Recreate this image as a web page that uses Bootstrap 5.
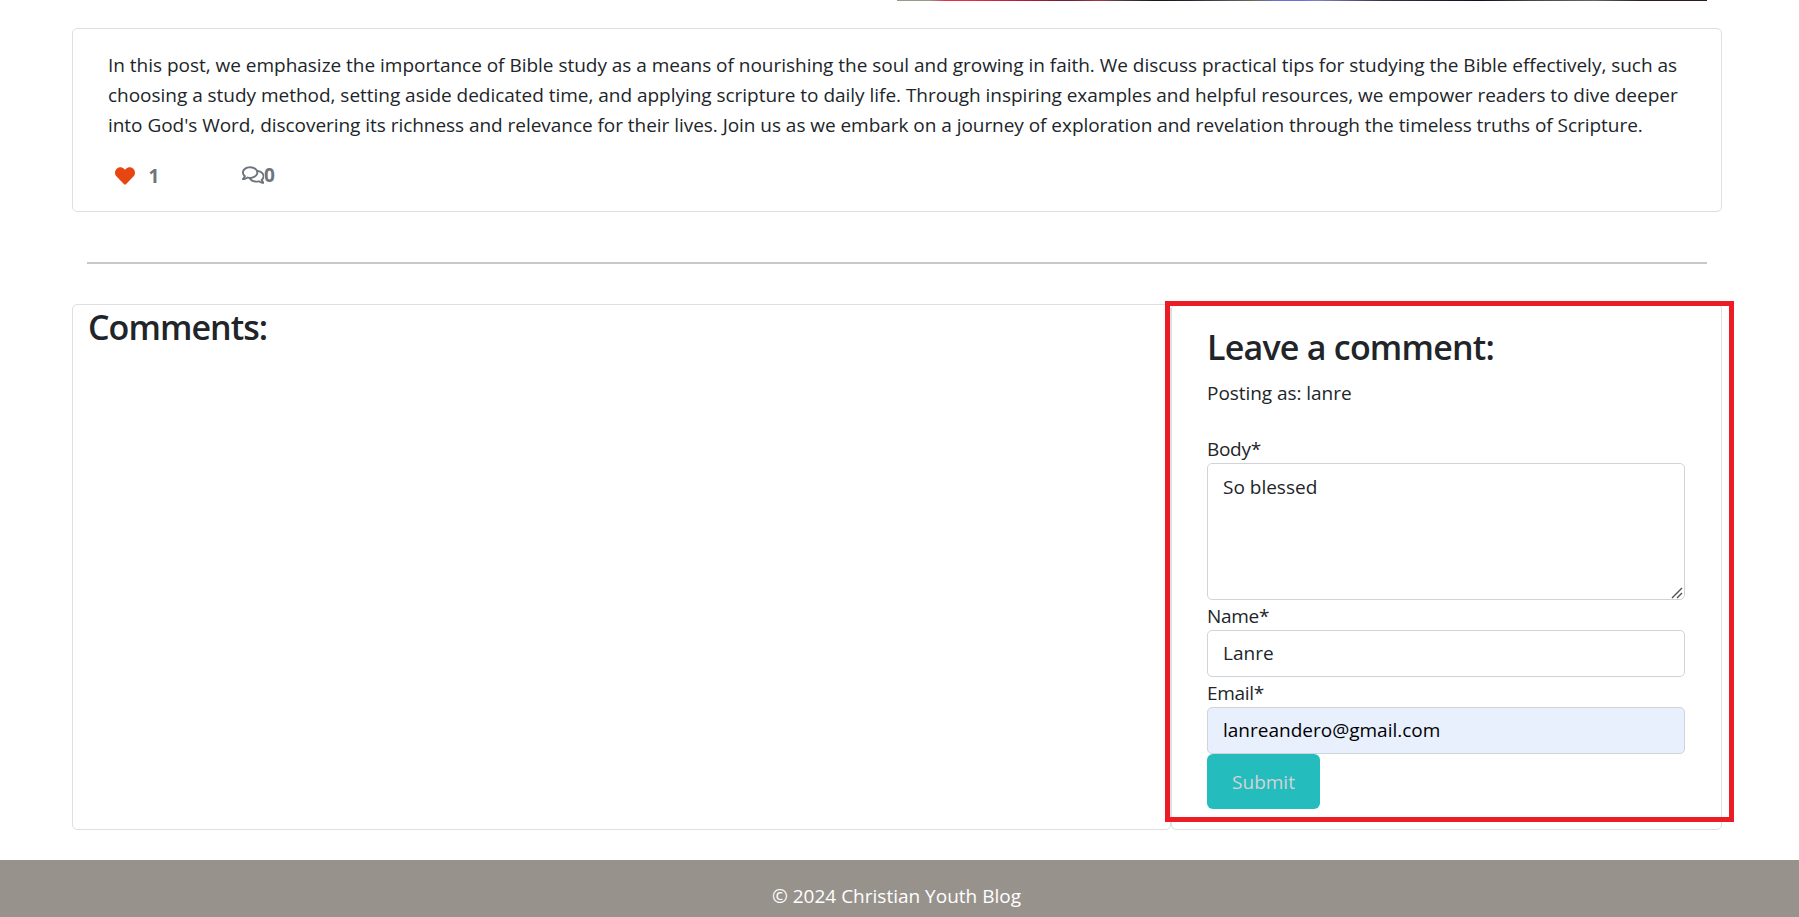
<!DOCTYPE html>
<html lang="en">
<head>
<meta charset="utf-8">
<meta name="viewport" content="width=device-width, initial-scale=1">
<title>Christian Youth Blog</title>
<link href="https://cdn.jsdelivr.net/npm/bootstrap@5.3.0/dist/css/bootstrap.min.css" rel="stylesheet">
<style>
  html { font-size: 20px; overflow: hidden; }
  body { font-family: "Open Sans", "Noto Sans", sans-serif; color: #212529; font-size: 19px; line-height: 30px; overflow: hidden; }
  .blog-page { width: 1650px; margin-left: 72px; }
  .post-image { height: 1px; width: 810px; margin-right: 15px;
    background: linear-gradient(90deg,#99998c 0 4%,#e0304a 6% 9%,#b01a36 16%,#6a2034 21%,#a03848 25%,#4a3a40 28%,#15151c 32%,#252532 36%,#55505a 41%,#6a6a58 44%,#6a70d8 47% 50%,#8080c8 52%,#33334a 60%,#0c1020 72%,#444 78%,#666 86%,#2a1c1c 92%); }
  .card { border-color: #dedfe0; border-radius: 5px; }
  .post-card { height: 184px; margin-top: 27px; padding: 21px 34px 0 35px; }
  .post-line { display: block; white-space: nowrap; }
  .post-line:nth-child(1) { letter-spacing: -.02px; }
  .post-line:nth-child(2) { letter-spacing: -.026px; }
  .post-line:nth-child(3) { letter-spacing: -.041px; }
  .post-meta { margin-top: 20px; color: #6c757d; }
  .likes { width: 133.5px; padding: 1px 0 0 7px; }
  .likes svg { width: 20px; height: 20px; margin: 4.5px 13.5px 0 0; fill: #e84610; }
  .replies svg { width: 22.5px; height: 20px; margin-top: 4.5px; fill: currentColor; }
  .divider { height: 2px; margin: 50px 15px 40px; background: #c8c8c8; }
  .panel { height: 526px; }
  .comments-panel { width: 1099px; padding: 0 15px; }
  .form-panel { width: 551px; padding: 20px 36px 0 35px; }
  h3 { font-size: 34px; font-weight: 600; line-height: 44px; margin-bottom: 9px; white-space: nowrap; letter-spacing: -.77px; }
  .comments-panel h3 { letter-spacing: -.95px; }
  .posting-as { margin-bottom: 25px; letter-spacing: -.05px; }
  .comment-form label { display: block; height: 30px; line-height: 32px; letter-spacing: -.3px; }
  .form-control { display: block; font-size: 19px; line-height: 30px; border-color: #ced4da; border-radius: 5px; padding: 6.5px 15px 7.5px; height: 47px; color: #212529; }
  textarea.form-control { height: 137px; padding-top: 8px; resize: none; }
  .grip { position: absolute; right: 2px; bottom: 1px; width: 12px; height: 12px; stroke: #505050; stroke-width: 1.4; fill: none; }
  .form-control.autofilled { background: #e8f0fe; color: #000; }
  .btn-submit { display: block; background: #25bcbe; color: #d3d3d3; width: 113px; height: 55px; border-radius: 6px; border: 0; padding: 1px 0 0; }
  .red-frame { position: absolute; left: 1093px; top: -3px; width: 569px; height: 521px; border: 5px solid #ed1c24; pointer-events: none; }
  .site-footer { background: #98928d; height: 57px; margin-top: 30px; padding: 21px 6px 0 0; color: #fff; }
</style>
</head>
<body>
<main class="blog-page">
  <div class="post-image ms-auto"></div>
  <article class="card post-card">
    <div>
      <span class="post-line">In this post, we emphasize the importance of Bible study as a means of nourishing the soul and growing in faith. We discuss practical tips for studying the Bible effectively, such as</span>
      <span class="post-line">choosing a study method, setting aside dedicated time, and applying scripture to daily life. Through inspiring examples and helpful resources, we empower readers to dive deeper</span>
      <span class="post-line">into God's Word, discovering its richness and relevance for their lives. Join us as we embark on a journey of exploration and revelation through the timeless truths of Scripture.</span>
    </div>
    <div class="post-meta d-flex fw-bold">
      <div class="likes d-flex align-items-start">
        <svg viewBox="0 0 512 512"><path d="M462.3 62.6C407.5 15.9 326 24.3 275.7 76.2L256 96.5l-19.7-20.3C186.1 24.3 104.5 15.9 49.7 62.6c-62.8 53.6-66.1 149.8-9.9 207.9l193.5 199.8c12.5 12.9 32.8 12.9 45.3 0l193.5-199.8c56.3-58.1 53-154.3-9.8-207.9z"/></svg>
        <span>1</span>
      </div>
      <div class="replies d-flex align-items-start">
        <svg viewBox="0 0 576 512"><path d="M532 386.2c27.5-27.1 44-61.1 44-98.2 0-80-76.5-146.1-176.2-157.9C368.3 72.5 294.3 32 208 32 93.1 32 0 103.6 0 192c0 37 16.5 71 44 98.2-15.3 30.7-37.3 54.5-37.7 54.9-6.3 6.7-8.1 16.5-4.4 25 3.6 8.5 12 14 21.2 14 53.5 0 96.7-20.2 125.2-38.8 9.2 2.1 18.7 3.7 28.4 4.9C208.1 407.6 281.8 448 368 448c20.8 0 40.8-2.4 59.8-6.8C456.3 459.7 499.4 480 553 480c9.2 0 17.5-5.5 21.2-14 3.6-8.5 1.9-18.3-4.4-25-.4-.3-22.5-24.1-37.8-54.8zm-392.8-92.3L122.1 305c-14.1 9.1-28.5 16.3-43.1 21.4 2.7-4.7 5.4-9.7 8-14.8l15.5-31.1L77.7 256C64.2 242.6 48 220.7 48 192c0-60.7 73.3-112 160-112s160 51.3 160 112-73.3 112-160 112c-16.5 0-33-1.9-49-5.6l-19.8-4.5zM498.3 352l-24.7 24.4 15.5 31.1c2.6 5.1 5.3 10.1 8 14.8-14.6-5.1-29-12.3-43.1-21.4l-17.1-11.1-19.9 4.6c-16 3.7-32.5 5.6-49 5.6-54 0-102.2-20.1-131.3-49.7C338 339.5 416 272.9 416 192c0-3.4-.4-6.7-.7-10C479.7 196.5 528 238.8 528 288c0 28.7-16.2 50.6-29.7 64z"/></svg>
        <span>0</span>
      </div>
    </div>
  </article>
  <div class="divider"></div>
  <section class="d-flex position-relative">
    <div class="card panel comments-panel"><h3>Comments:</h3></div>
    <div class="card panel form-panel">
      <h3>Leave a comment:</h3>
      <div class="posting-as">Posting as: lanre</div>
      <form class="comment-form">
        <label for="body">Body*</label>
        <div class="position-relative">
          <textarea id="body" class="form-control">So blessed</textarea>
          <svg class="grip" viewBox="0 0 12 12"><path d="M1 11 11 1M6 11l5-5"/></svg>
        </div>
        <label for="name">Name*</label>
        <input id="name" class="form-control" value="Lanre">
        <label for="email">Email*</label>
        <input id="email" class="form-control autofilled" value="lanreandero@gmail.com">
        <button type="button" class="btn-submit">Submit</button>
      </form>
    </div>
    <div class="red-frame"></div>
  </section>
</main>
<footer class="site-footer text-center">© 2024 Christian Youth Blog</footer>
<script src="https://cdn.jsdelivr.net/npm/bootstrap@5.3.0/dist/js/bootstrap.bundle.min.js"></script>
</body>
</html>
